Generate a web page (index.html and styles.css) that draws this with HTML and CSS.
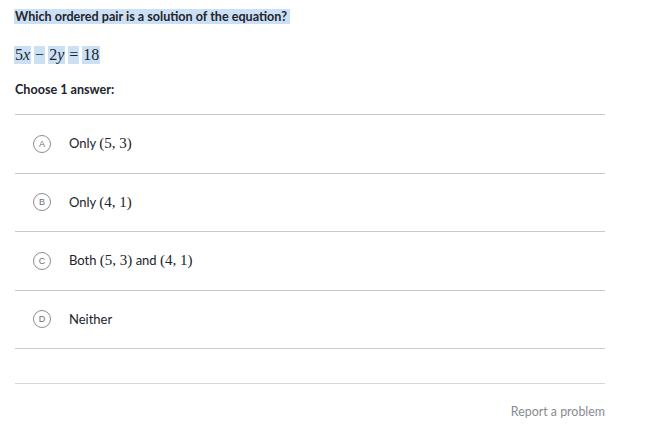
FILE: index.html
```html
<!DOCTYPE html>
<html>
<head>
<meta charset="utf-8">
<link rel="stylesheet" href="styles.css">
</head>
<body>
<div class="page">
  <div class="question"><span class="hl">Which ordered pair is a solution of the equation?</span></div>
  <div class="equation">
    <span class="hl">5<i>x</i></span><span class="op hl">−</span><span class="hl">2<i>y</i></span><span class="op hl">=</span><span class="hl">18</span>
  </div>
  <div class="choose">Choose 1 answer:</div>
  <ul class="choices">
    <li class="choice"><span class="letter">A</span><span class="label">Only <span class="m">(5, 3)</span></span></li>
    <li class="choice"><span class="letter">B</span><span class="label">Only <span class="m">(4, 1)</span></span></li>
    <li class="choice"><span class="letter">C</span><span class="label">Both <span class="m">(5, 3)</span> and <span class="m">(4, 1)</span></span></li>
    <li class="choice"><span class="letter">D</span><span class="label">Neither</span></li>
  </ul>
  <div class="footer-gap"></div>
  <div class="report">Report a problem</div>
</div>
</body>
</html>
```
FILE: styles.css
```css
html, body {
  margin: 0;
  padding: 0;
  background: #ffffff;
}
body {
  font-family: Lato, "Noto Sans", sans-serif;
  color: #21242c;
}
.page {
  width: 590px;
  margin-left: 15px;
  padding-top: 8px;
}
.question {
  font-weight: 700;
  font-size: 12.6px;
  line-height: 18px;
  margin-left: -1px;
}
.hl {
  background: #cce0f5;
}
.question .hl {
  padding: 0 3px 0 1px;
}
.equation {
  margin-top: 20px;
  margin-left: -1px;
  font-family: "Liberation Serif", "DejaVu Serif", serif;
  font-size: 16px;
  line-height: 18px;
  height: 18px;
  color: #21242c;
}
.equation .hl {
  display: inline-block;
  padding: 0 1px;
}
.equation .op {
  margin: 0 3px;
}
.equation i {
  font-style: italic;
}
.choose {
  margin-top: 18px;
  font-weight: 700;
  font-size: 12.6px;
  line-height: 16px;
}
.choices {
  list-style: none;
  margin: 16px 0 0;
  padding: 0;
  border-top: 1px solid #c7c9cc;
}
.choice {
  display: flex;
  align-items: center;
  height: 57.5px;
  border-bottom: 1px solid #c7c9cc;
  box-sizing: content-box;
}
.letter {
  width: 16px;
  height: 16px;
  border: 1.5px solid #8a8d92;
  border-radius: 50%;
  margin-left: 18px;
  margin-right: 18px;
  display: flex;
  align-items: center;
  justify-content: center;
  font-size: 9px;
  font-weight: 400;
  color: #6b6f75;
  font-family: "Liberation Sans", Arial, sans-serif;
  flex: none;
}
.label {
  font-size: 13px;
  color: #21242c;
}
.m {
  font-family: "Liberation Serif", "DejaVu Serif", serif;
  font-size: 15px;
}
.footer-gap {
  height: 34px;
  border-bottom: 1px solid #d6d8da;
}
.report {
  text-align: right;
  font-size: 12.4px;
  color: #888b90;
  margin-top: 20px;
}
```
